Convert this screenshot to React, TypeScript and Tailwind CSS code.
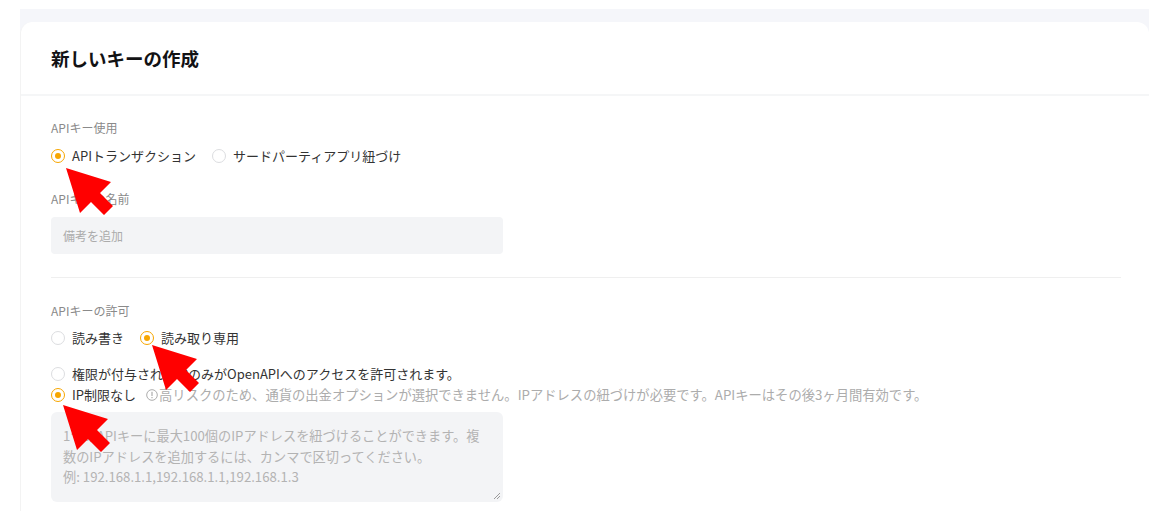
import React from "react";

const FONT = '"Noto Sans CJK JP", "Noto Sans", sans-serif';

function Radio({ checked }: { checked?: boolean }) {
  return checked ? (
    <span className="flex h-[14px] w-[14px] shrink-0 items-center justify-center rounded-full border border-[#f7a600] bg-white">
      <span className="h-[6px] w-[6px] rounded-full bg-[#f7a600]" />
    </span>
  ) : (
    <span className="h-[14px] w-[14px] shrink-0 rounded-full border border-[#dcdde0] bg-white" />
  );
}

function Option({ checked, label }: { checked?: boolean; label: string }) {
  return (
    <label className="flex h-[20px] items-center gap-[7px] text-[13px] leading-[20px] text-[#333]">
      <Radio checked={checked} />
      <span>{label}</span>
    </label>
  );
}

function Arrow({ x, y }: { x: number; y: number }) {
  return (
    <svg
      className="pointer-events-none absolute"
      style={{ left: x, top: y }}
      width="56"
      height="56"
      viewBox="0 0 56 56"
    >
      <polygon points="0,0 45,14 34,25 47,38 38,47 25,34 14,45" fill="#ff0000" />
    </svg>
  );
}

export default function App() {
  return (
    <div
      className="relative h-[511px] w-[1163px] overflow-hidden bg-white"
      style={{ fontFamily: FONT }}
    >
      <div className="ml-[20px] mt-[9px] w-[1129px] bg-[#f5f6fa] pt-[13px]">
        <div className="h-[520px] rounded-t-[12px] border-l border-[#f3f3f3] bg-white">
          <div className="flex h-[72px] items-center px-[30px]">
            <h1 className="text-[18.5px] font-bold leading-[26px] text-[#121214]">新しいキーの作成</h1>
          </div>
          <div className="h-[2px] bg-[#f5f6f7]" />
          <div className="px-[30px] pt-[23px]">
            <div className="text-[12px] leading-[18px] text-[#8a8a8a]">APIキー使用</div>
            <div className="mt-[9px] flex items-center gap-[16px]">
              <Option checked label="APIトランザクション" />
              <Option label="サードパーティアプリ紐づけ" />
            </div>
            <div className="mt-[24px] text-[12px] leading-[18px] text-[#8a8a8a]">APIキーの名前</div>
            <div className="mt-[9px] flex h-[37px] w-[452px] items-center rounded-[4px] bg-[#f3f4f6] px-[12px] text-[12px] text-[#ababab]">
              備考を追加
            </div>
            <div className="mt-[23px] h-px w-[1070px] bg-[#efefef]" />
            <div className="mt-[24px] text-[12px] leading-[18px] text-[#8a8a8a]">APIキーの許可</div>
            <div className="mt-[8px] flex items-center gap-[16px]">
              <Option label="読み書き" />
              <Option checked label="読み取り専用" />
            </div>
            <div className="mt-[16px] flex flex-col gap-[1px]">
              <Option label="権限が付与されたIPのみがOpenAPIへのアクセスを許可されます。" />
              <div className="flex items-center">
                <Option checked label="IP制限なし" />
                <span className="ml-[10px] flex items-center gap-[1px] text-[13.3px] leading-[20px] text-[#acacac]">
                  <svg width="12" height="12" viewBox="0 0 12 12" className="shrink-0">
                    <circle cx="6" cy="6" r="5.3" fill="none" stroke="#acacac" strokeWidth="1" />
                    <rect x="5.4" y="2.8" width="1.2" height="4.2" fill="#acacac" />
                    <rect x="5.4" y="8" width="1.2" height="1.2" fill="#acacac" />
                  </svg>
                  <span>高リスクのため、通貨の出金オプションが選択できません。IPアドレスの紐づけが必要です。APIキーはその後3ヶ月間有効です。</span>
                </span>
              </div>
            </div>
            <div className="relative mt-[7px] h-[90px] w-[452px] rounded-[6px] bg-[#f3f4f6] px-[12px] pt-[14px] text-[13.2px] leading-[20.5px] text-[#b3b3b3]">
              <div className="whitespace-nowrap">1つのAPIキーに最大100個のIPアドレスを紐づけることができます。複</div>
              <div className="whitespace-nowrap">数のIPアドレスを追加するには、カンマで区切ってください。</div>
              <div className="whitespace-nowrap">例: 192.168.1.1,192.168.1.1,192.168.1.3</div>
              <svg className="absolute bottom-[2px] right-[2px]" width="8" height="8" viewBox="0 0 8 8">
                <line x1="7" y1="1" x2="1" y2="7" stroke="#9a9a9a" strokeWidth="1" />
                <line x1="7" y1="4" x2="4" y2="7" stroke="#9a9a9a" strokeWidth="1" />
              </svg>
            </div>
          </div>
        </div>
      </div>
      <Arrow x={66} y={168} />
      <Arrow x={152} y={345} />
      <Arrow x={63} y={405} />
    </div>
  );
}
